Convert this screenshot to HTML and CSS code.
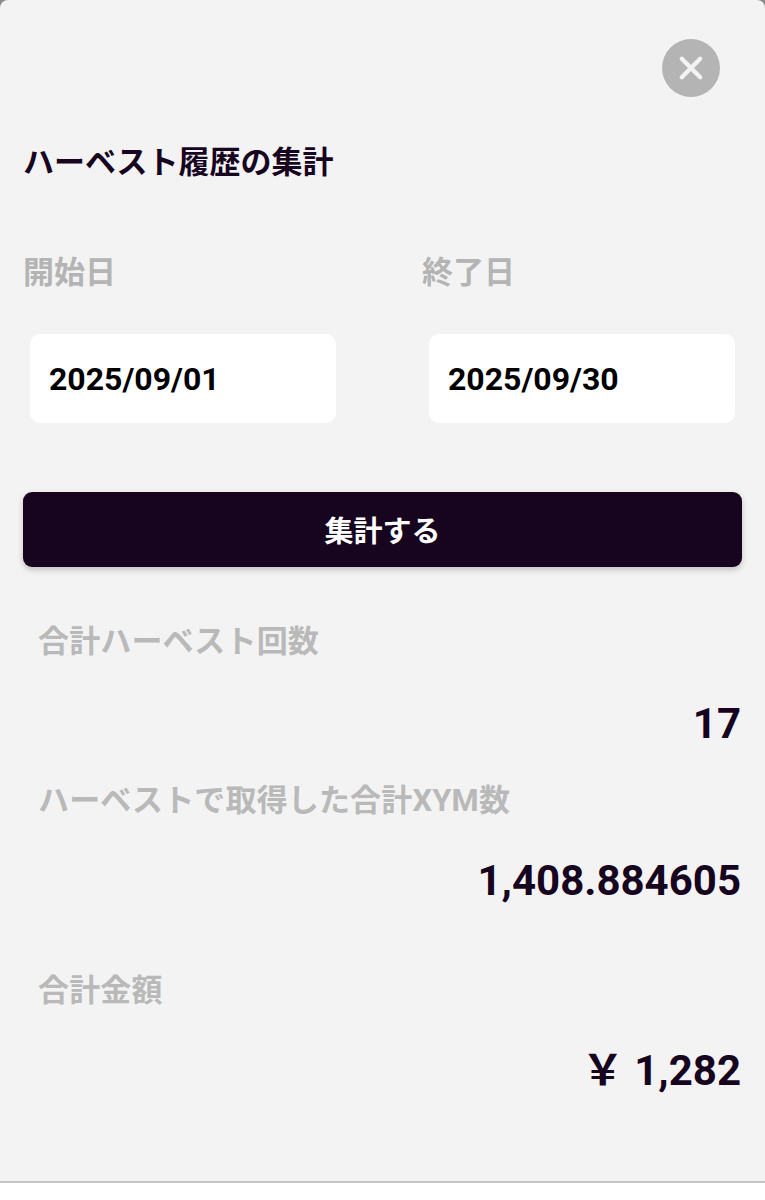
FILE: index.html
```html
<!DOCTYPE html>
<html lang="ja">

<head>
  <meta charset="UTF-8">
  <meta name="viewport" content="width=765, height=1200, initial-scale=1.0">
  <title>ハーベスト履歴の集計</title>
  <link rel="stylesheet" href="styles.css">
</head>

<body>
  <div class="sheet">
    <div class="close-row">
      <button class="close-btn" aria-label="閉じる">
        <svg viewBox="0 0 24 24" width="26" height="26">
          <path d="M3.5 3.5L20.5 20.5M20.5 3.5L3.5 20.5" fill="none" stroke="#f3f3f4" stroke-width="4" stroke-linecap="round"></path>
        </svg>
      </button>
    </div>

    <h2 class="title">ハーベスト履歴の集計</h2>

    <div class="dates">
      <div class="date-col">
        <div class="date-label">開始日</div>
        <div class="date-input">2025/09/01</div>
      </div>
      <div class="date-col">
        <div class="date-label">終了日</div>
        <div class="date-input">2025/09/30</div>
      </div>
    </div>

    <button class="submit-btn">集計する</button>

    <div class="result result-count">
      <div class="result-label">合計ハーベスト回数</div>
      <div class="result-value">17</div>
    </div>
    <div class="result result-xym">
      <div class="result-label">ハーベストで取得した合計XYM数</div>
      <div class="result-value">1,408.884605</div>
    </div>
    <div class="result result-yen">
      <div class="result-label">合計金額</div>
      <div class="result-value">￥ 1,282</div>
    </div>
  </div>
</body>

</html>
```

FILE: styles.css
```css
html,
body {
  margin: 0;
  padding: 0;
}

body {
  width: 765px;
  height: 1200px;
  overflow: hidden;
  background: linear-gradient(#8a8a8a 0 20px, #ffffff 20px);
  font-family: Roboto, "Noto Sans CJK JP", sans-serif;
}

.sheet {
  box-sizing: border-box;
  height: 1183px;
  padding: 39px 23px 0 23px;
  background: #f3f3f4;
  border-bottom: 2px solid #c4c4c4;
  border-radius: 8px 8px 0 0;
}

.close-row {
  display: flex;
  justify-content: flex-end;
  padding-right: 22px;
}

.close-btn {
  display: flex;
  align-items: center;
  justify-content: center;
  width: 58px;
  height: 58px;
  padding: 0;
  border: none;
  border-radius: 50%;
  background: #b4b4b4;
}

.title {
  margin: 43px 0 0;
  font-size: 31px;
  line-height: 45px;
  font-weight: 700;
  color: #17041f;
}

.dates {
  display: grid;
  grid-template-columns: 399px 1fr;
  margin-top: 65px;
}

.date-label {
  font-size: 31px;
  line-height: 45px;
  font-weight: 700;
  color: #b4b4b4;
}

.date-input {
  box-sizing: border-box;
  width: 306.5px;
  height: 89px;
  margin: 39px 0 0 6.5px;
  padding-left: 19.5px;
  background: #ffffff;
  border-radius: 10px;
  font-size: 32px;
  line-height: 91px;
  font-weight: 700;
  color: #000000;
}

.submit-btn {
  display: block;
  width: 100%;
  height: 75px;
  margin-top: 69px;
  padding: 0 0 2px;
  border: none;
  border-radius: 9px;
  background: #17041f;
  box-shadow: 0 3px 6px rgba(0, 0, 0, 0.2);
  font-family: inherit;
  font-size: 29px;
  font-weight: 700;
  color: #ffffff;
}

.result-label {
  padding-left: 15px;
  font-size: 31px;
  line-height: 45px;
  font-weight: 700;
  letter-spacing: 0.15px;
  color: #b9b9b9;
}

.result-value {
  padding-right: 1px;
  text-align: right;
  font-size: 42px;
  line-height: 50px;
  font-weight: 700;
  color: #17041f;
}

.result-count {
  margin-top: 52px;
}

.result-count .result-value {
  margin-top: 35px;
}

.result-xym {
  margin-top: 29px;
}

.result-xym .result-value {
  margin-top: 33px;
}

.result-yen {
  margin-top: 62px;
}

.result-yen .result-value {
  margin-top: 33px;
}
```
